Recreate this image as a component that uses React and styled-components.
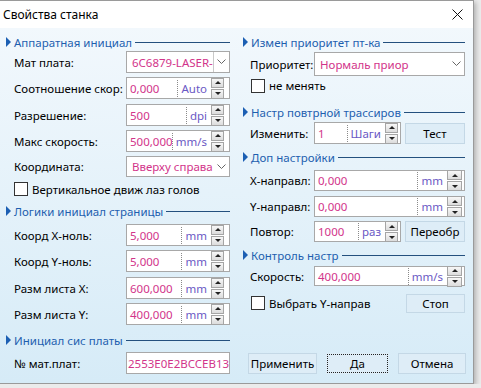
import React from "react";
import styled, { createGlobalStyle } from "styled-components";

const Global = createGlobalStyle`
  html, body {
    margin: 0;
    background: #ebebeb;
    font-family: "Noto Sans", "Open Sans", sans-serif;
    font-size: 11.5px;
  }
`;

// window frame
const Window = styled.div`
  width: 473px;
  height: 382px;
  border: 1px solid #9a9a9a;
  border-left: none;
  box-shadow: 2px 2px 5px rgba(0, 0, 0, 0.25);
  display: flex;
  flex-direction: column;
  background: linear-gradient(#f4f9fd, #d6ebf7);
`;

const TitleBar = styled.div`
  height: 27px;
  background: #fff;
  display: flex;
  align-items: center;
  justify-content: space-between;
  padding: 0 10px 0 3px;
  color: #000;
  font-size: 12px;
`;

const Body = styled.div`
  flex: 1;
  display: flex;
  padding-left: 6px;
`;

const Column = styled.div`
  width: ${p => p.w}px;
  margin-left: ${p => p.ml || 0}px;
  display: flex;
  flex-direction: column;
`;

const Head = styled.div`
  display: flex;
  align-items: center;
  height: 16px;
  margin-top: ${p => p.mt}px;
  color: #1e5faf;
  white-space: nowrap;
  &::before {
    content: "";
    border-left: 5px solid #1c5fb3;
    border-top: 5px solid transparent;
    border-bottom: 5px solid transparent;
    margin-right: 3px;
  }
  &::after {
    content: "";
    flex: 1;
    height: 1px;
    background: #24507e;
    margin-left: 3px;
  }
`;

const Row = styled.div`
  display: flex;
  align-items: center;
  height: ${p => p.h || 22}px;
  margin-top: ${p => p.mt}px;
  padding-left: ${p => p.pl || 8}px;
  white-space: nowrap;
`;

const Label = styled.span`
  width: ${p => p.w}px;
  flex: none;
  color: #000;
`;

const Box = styled.div`
  width: ${p => p.w}px;
  height: ${p => p.h || 22}px;
  box-sizing: border-box;
  border: 1px solid #a8a8a8;
  background: #fff;
  display: flex;
  align-items: center;
  flex: none;
  padding-right: ${p => p.pr || 0}px;
`;

const Value = styled.span`
  flex: 1;
  overflow: hidden;
  white-space: nowrap;
  color: #d2348a;
  padding-left: ${p => p.pl || 3}px;
`;

const Unit = styled.span`
  border-left: 1px dotted #8a8a8a;
  color: #6a58c4;
  padding: 0 4px 0 3px;
  line-height: 17px;
`;

const SpinWrap = styled.div`
  display: flex;
  flex-direction: column;
  gap: 1px;
`;

const SpinBtn = styled.div`
  width: ${p => p.w}px;
  height: 8px;
  border: 1px solid #a5a5a5;
  background: linear-gradient(#f7f7f7, #dcdcdc);
  display: flex;
  align-items: center;
  justify-content: center;
  &::after {
    content: "";
    border-left: 3px solid transparent;
    border-right: 3px solid transparent;
    ${p => (p.down ? "border-top: 3px solid #222;" : "border-bottom: 3px solid #222;")}
  }
`;

const DropPart = styled.div`
  width: 15px;
  align-self: stretch;
  border-left: ${p => (p.sep ? "1px solid #c9c9c9" : "none")};
  display: flex;
  align-items: center;
  justify-content: center;
`;

const Check = styled.span`
  width: 12px;
  height: 12px;
  border: 1px solid #333;
  background: #fff;
  margin-right: 4px;
  flex: none;
`;

const Button = styled.div`
  width: ${p => p.w}px;
  height: ${p => p.h || 21}px;
  box-sizing: border-box;
  margin-left: ${p => p.ml || 0}px;
  background: #deedf7;
  border: 1px solid ${p => (p.focus ? "transparent" : "#c4d8e6")};
  outline: ${p => (p.focus ? "1px dotted #222" : "none")};
  outline-offset: ${p => (p.focus ? "-2px" : "0")};
  display: flex;
  align-items: center;
  justify-content: center;
  color: #000;
  flex: none;
`;

const Spacer = styled.div`
  flex: 1;
`;

const Buttons = styled.div`
  display: flex;
  gap: 9px;
  margin-bottom: 9px;
  padding-left: 5px;
`;

const Chevron = () => (
  <svg width="9" height="6" viewBox="0 0 9 6">
    <polyline points="0.5,0.5 4.5,4.5 8.5,0.5" fill="none" stroke="#666" strokeWidth="1" />
  </svg>
);

const Spin = ({ w = 11 }) => (
  <SpinWrap>
    <SpinBtn w={w} />
    <SpinBtn w={w} down />
  </SpinWrap>
);

const SpinField = ({ w, value, unit, h, sw, pr = 5 }) => (
  <Box w={w} h={h} pr={pr}>
    <Value>{value}</Value>
    <Unit>{unit}</Unit>
    <Spin w={sw} />
  </Box>
);

const Combo = ({ w, value, sep, h }) => (
  <Box w={w} h={h}>
    <Value pl={5}>{value}</Value>
    <DropPart sep={sep}>
      <Chevron />
    </DropPart>
  </Box>
);

const CheckRow = ({ text, mt, h = 14, children }) => (
  <Row mt={mt} h={h} pl={8}>
    <Check />
    <span style={{ flex: 1 }}>{text}</span>
    {children}
  </Row>
);

export default function App() {
  return (
    <>
      <Global />
      <Window>
        <TitleBar>
          <span>Свойства станка</span>
          <svg width="11" height="11" viewBox="0 0 11 11">
            <path d="M0.5 0.5 L10.5 10.5 M10.5 0.5 L0.5 10.5" stroke="#111" strokeWidth="1" />
          </svg>
        </TitleBar>
        <Body>
          <Column w={224}>
            <Head mt={6}>Аппаратная инициал</Head>
            <Row mt={1}>
              <Label w={112}>Мат плата:</Label>
              <Combo w={104} value="6C6879-LASER-M2" sep />
            </Row>
            <Row mt={4}>
              <Label w={112}>Соотношение скор:</Label>
              <SpinField w={104} value="0,000" unit="Auto" />
            </Row>
            <Row mt={5}>
              <Label w={112}>Разрешение:</Label>
              <SpinField w={104} value="500" unit="dpi" />
            </Row>
            <Row mt={4}>
              <Label w={112}>Макс скорость:</Label>
              <SpinField w={104} value="500,000" unit="mm/s" />
            </Row>
            <Row mt={4} h={21}>
              <Label w={112}>Координата:</Label>
              <Combo w={104} h={21} value="Вверху справа" />
            </Row>
            <CheckRow mt={5} text="Вертикальное движ лаз голов" />
            <Head mt={7}>Логики инициал страницы</Head>
            <Row mt={5}>
              <Label w={112}>Коорд X-ноль:</Label>
              <SpinField w={104} value="5,000" unit="mm" />
            </Row>
            <Row mt={4}>
              <Label w={112}>Коорд Y-ноль:</Label>
              <SpinField w={104} value="5,000" unit="mm" />
            </Row>
            <Row mt={5}>
              <Label w={112}>Разм листа X:</Label>
              <SpinField w={104} value="600,000" unit="mm" />
            </Row>
            <Row mt={4}>
              <Label w={112}>Разм листа Y:</Label>
              <SpinField w={104} value="400,000" unit="mm" />
            </Row>
            <Head mt={7}>Инициал сис платы</Head>
            <Row mt={4}>
              <Label w={112}>№ мат.плат:</Label>
              <Box w={104}>
                <Value pl={1}>2553E0E2BCCEB137A</Value>
              </Box>
            </Row>
          </Column>

          <Column w={222} ml={13}>
            <Head mt={6}>Измен приоритет пт-ка</Head>
            <Row mt={2} h={24} pl={7}>
              <Label w={64}>Приоритет:</Label>
              <Combo w={151} h={24} value="Нормаль приор" />
            </Row>
            <CheckRow mt={3} h={13} text="не менять" />
            <Head mt={12}>Настр повтрной трассиров</Head>
            <Row mt={2} pl={7}>
              <Label w={64}>Изменить:</Label>
              <SpinField w={87} value="1" unit="Шаги" pr={2} />
              <Button w={60} ml={4}>Тест</Button>
            </Row>
            <Head mt={5}>Доп настройки</Head>
            <Row mt={5} h={21} pl={7}>
              <Label w={64}>X-направл:</Label>
              <SpinField w={151} h={21} value="0,000" unit="mm" sw={13} pr={2} />
            </Row>
            <Row mt={5} h={21} pl={7}>
              <Label w={64}>Y-направл:</Label>
              <SpinField w={151} h={21} value="0,000" unit="mm" sw={13} pr={2} />
            </Row>
            <Row mt={4} h={21} pl={7}>
              <Label w={64}>Повтор:</Label>
              <SpinField w={87} h={21} value="1000" unit="раз" pr={2} />
              <Button w={60} ml={4}>Переобр</Button>
            </Row>
            <Head mt={5}>Контроль настр</Head>
            <Row mt={3} h={20} pl={7}>
              <Label w={64}>Скорость:</Label>
              <SpinField w={151} h={20} value="400,000" unit="mm/s" sw={13} pr={2} />
            </Row>
            <CheckRow mt={8} h={18} text="Выбрать Y-направ">
              <Button w={59} h={19}>Стоп</Button>
            </CheckRow>
            <Spacer />
            <Buttons>
              <Button w={69}>Применить</Button>
              <Button w={63} focus>Да</Button>
              <Button w={68}>Отмена</Button>
            </Buttons>
          </Column>
        </Body>
      </Window>
    </>
  );
}
